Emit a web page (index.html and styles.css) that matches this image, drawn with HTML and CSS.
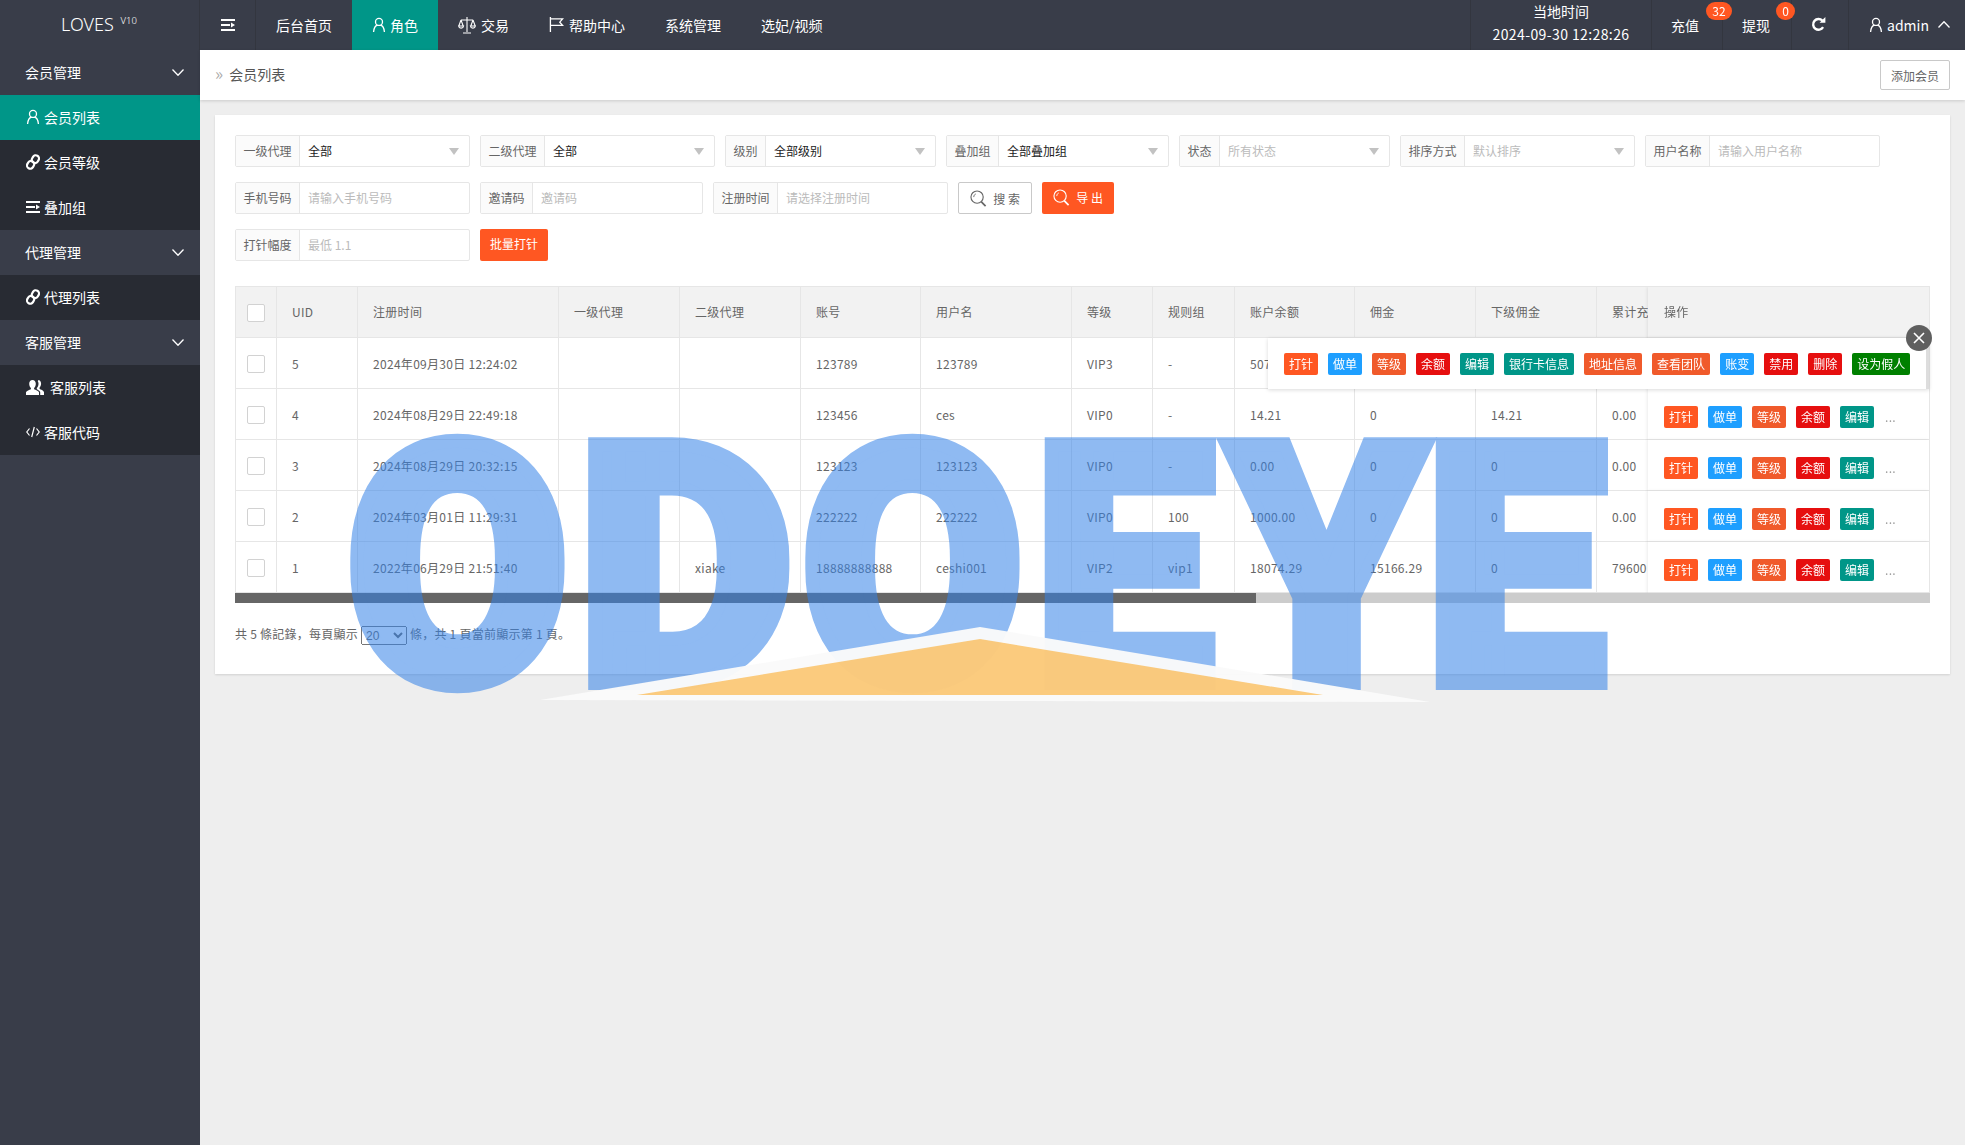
FILE: index.html
```html
<!DOCTYPE html>
<html lang="zh-CN">
<head>
    <meta charset="UTF-8">
    <title>会员列表</title>
    <link rel="stylesheet" href="styles.css">
</head>
<body>
    <!-- icon sprites -->
    <svg class="sprites" xmlns="http://www.w3.org/2000/svg">
        <symbol id="i-user" viewBox="0 0 16 18"><circle cx="8" cy="5.5" r="4" fill="none" stroke="currentColor" stroke-width="1.5"/><path d="M1.8 17c.4-4.600 2.800-7.500 4.400-8M14.200 17c-.4-4.600-2.800-7.500-4.400-8" fill="none" stroke="currentColor" stroke-width="1.5"/></symbol>
        <symbol id="i-shrink" viewBox="0 0 14 12"><path d="M0 0h14v2H0zM0 10h14v2H0zM0 5h9v2H0zM10 3.500 14 6l-4 2.500z" fill="currentColor"/></symbol>
        <symbol id="i-scale" viewBox="0 0 18 18"><path d="M9 1v15M5 17h8M3 4h12M3 4 .8 10M3 4l2.200 6M15 4l-2.200 6M15 4l2.200 6M.6 10c.4 2.800 4.600 2.800 5 0zM12.400 10c.4 2.800 4.600 2.800 5 0z" fill="none" stroke="currentColor" stroke-width="1.100"/></symbol>
        <symbol id="i-flag" viewBox="0 0 16 16"><path d="M1.500 0v16M1.500 2h13l-3 3.500 3 3.500h-13" fill="none" stroke="currentColor" stroke-width="1.400"/></symbol>
        <symbol id="i-link" viewBox="0 0 14 16"><g fill="none" stroke="currentColor" stroke-width="2.200"><rect x="6.200" y="1.200" width="6.400" height="8" rx="3.200" transform="rotate(30 9.400 5.200)"/><rect x="1.400" y="6.800" width="6.400" height="8" rx="3.200" transform="rotate(30 4.600 10.800)"/></g></symbol>
        <symbol id="i-users" viewBox="0 0 18 16"><path d="M6.500 1c2 0 3.300 1.700 3.300 3.800 0 1.800-.7 3.200-1.700 4.200v1.200c1.500.7 4.300 1.500 4.900 3.100V16H0v-2.700c.6-1.600 3.400-2.400 4.900-3.100V9C3.900 8 3.200 6.600 3.200 4.800 3.200 2.700 4.500 1 6.500 1zM12 1c1.900 0 3.100 1.600 3.100 3.600 0 1.700-.6 3-1.500 4v1.400c1.200.6 3.800 1.400 4.400 2.900V16h-3.800v-3c-.7-1.300-2-2-3.400-2.700V9.100c1-1.100 1.700-2.600 1.700-4.300 0-1.100-.3-2.100-.8-2.900.5-.6 1.100-.9 1.800-.9z" fill="currentColor"/></symbol>
        <symbol id="i-code" viewBox="0 0 14 12"><path d="M3.500 2.500 .8 6l2.700 3.500M10.500 2.500 13.200 6l-2.700 3.500M8.300 1 5.700 11" fill="none" stroke="currentColor" stroke-width="1.200"/></symbol>
        <symbol id="i-refresh" viewBox="0 0 14 14"><path d="M11.300 9.500A5 5 0 1 1 10.600 3.400" fill="none" stroke="currentColor" stroke-width="2.200"/><path d="M8 5.400h5.400V0z" fill="currentColor"/></symbol>
        <symbol id="i-down" viewBox="0 0 12 7"><path d="M.5.500 6 6.300 11.500.500" fill="none" stroke="currentColor" stroke-width="1.300"/></symbol>
        <symbol id="i-up" viewBox="0 0 12 7"><path d="M.5 6.500 6 .7l5.500 5.800" fill="none" stroke="currentColor" stroke-width="1.300"/></symbol>
        <symbol id="i-search" viewBox="0 0 18 18"><circle cx="7.500" cy="7.500" r="6.500" fill="none" stroke="currentColor" stroke-width="1.200"/><path d="M11.800 12.300 16.500 17" fill="none" stroke="currentColor" stroke-width="1.800"/><path d="M4 7.500c0-1.500.8-2.800 2-3.300" fill="none" stroke="currentColor"/></symbol>
    </svg>

    <header class="topbar">
        <div class="logo">LOVES <sup>V10</sup></div>
        <div class="toggle"><svg class="ic-shrink"><use href="#i-shrink"/></svg></div>
        <nav class="topnav">
            <a>后台首页</a>
            <a class="active"><svg class="ic"><use href="#i-user"/></svg>角色</a>
            <a><svg class="ic-scale"><use href="#i-scale"/></svg>交易</a>
            <a><svg class="ic-flag"><use href="#i-flag"/></svg>帮助中心</a>
            <a>系统管理</a>
            <a>选妃/视频</a>
        </nav>
        <div class="topright">
            <div class="clock"><div>当地时间</div><div class="clock-time">2024-09-30 12:28:26</div></div>
            <div class="tool tool-recharge">充值<span class="badge badge-wide">32</span></div>
            <div class="tool tool-withdraw">提现<span class="badge">0</span></div>
            <div class="tool tool-refresh"><svg class="ic-refresh"><use href="#i-refresh"/></svg></div>
            <div class="tool tool-user"><svg class="ic"><use href="#i-user"/></svg>admin<svg class="ic-chev"><use href="#i-up"/></svg></div>
        </div>
    </header>

    <div class="layout">
        <aside class="sidebar">
            <div class="side-group">会员管理<svg class="ic-chev"><use href="#i-down"/></svg></div>
            <div class="side-sub">
                <a class="active"><svg class="ic"><use href="#i-user"/></svg>会员列表</a>
                <a><svg class="ic"><use href="#i-link"/></svg>会员等级</a>
                <a><svg class="ic"><use href="#i-shrink"/></svg>叠加组</a>
            </div>
            <div class="side-group">代理管理<svg class="ic-chev"><use href="#i-down"/></svg></div>
            <div class="side-sub">
                <a><svg class="ic"><use href="#i-link"/></svg>代理列表</a>
            </div>
            <div class="side-group">客服管理<svg class="ic-chev"><use href="#i-down"/></svg></div>
            <div class="side-sub">
                <a><svg class="ic-users"><use href="#i-users"/></svg>客服列表</a>
                <a><svg class="ic"><use href="#i-code"/></svg>客服代码</a>
            </div>
        </aside>

        <main class="main">
            <div class="crumb">
                <span class="crumb-text"><span class="crumb-arrow">»</span>会员列表</span>
                <button class="btn-add">添加会员</button>
            </div>

            <section class="card">
                <div class="filter-row">
                    <div class="field"><label>一级代理</label><div class="control">全部<i class="caret"></i></div></div>
                    <div class="field"><label>二级代理</label><div class="control">全部<i class="caret"></i></div></div>
                    <div class="field"><label>级别</label><div class="control">全部级别<i class="caret"></i></div></div>
                    <div class="field"><label>叠加组</label><div class="control">全部叠加组<i class="caret"></i></div></div>
                    <div class="field"><label>状态</label><div class="control muted">所有状态<i class="caret"></i></div></div>
                    <div class="field"><label>排序方式</label><div class="control muted">默认排序<i class="caret"></i></div></div>
                    <div class="field"><label>用户名称</label><div class="control muted">请输入用户名称</div></div>
                </div>
                <div class="filter-row">
                    <div class="field"><label>手机号码</label><div class="control muted">请输入手机号码</div></div>
                    <div class="field"><label>邀请码</label><div class="control muted">邀请码</div></div>
                    <div class="field"><label>注册时间</label><div class="control muted">请选择注册时间</div></div>
                    <button class="btn-search"><svg class="ic-search"><use href="#i-search"/></svg>搜 索</button>
                    <button class="btn-export"><svg class="ic-search"><use href="#i-search"/></svg>导 出</button>
                </div>
                <div class="filter-row">
                    <div class="field"><label>打针幅度</label><div class="control muted">最低 1.1</div></div>
                    <button class="btn-batch">批量打针</button>
                </div>

                <div class="table-box">
                    <div class="table-scroll">
                        <table class="grid">
                            <colgroup>
                                <col class="c-check"><col class="c-uid"><col class="c-date"><col class="c-w121"><col class="c-w121"><col class="c-w120"><col class="c-w151"><col class="c-w81"><col class="c-w82"><col class="c-w120"><col class="c-w121"><col class="c-w121"><col class="c-w121"><col class="c-op">
                            </colgroup>
                            <thead>
                                <tr><th><i class="check"></i></th><th>UID</th><th>注册时间</th><th>一级代理</th><th>二级代理</th><th>账号</th><th>用户名</th><th>等级</th><th>规则组</th><th>账户余额</th><th>佣金</th><th>下级佣金</th><th>累计充值</th><th class="op">操作</th></tr>
                            </thead>
                            <tbody>
                                <tr><td><i class="check"></i></td><td>5</td><td>2024年09月30日 12:24:02</td><td></td><td></td><td>123789</td><td>123789</td><td>VIP3</td><td>-</td><td>5070.00</td><td>0</td><td>0</td><td>0.00</td><td class="op"></td></tr>
                                <tr><td><i class="check"></i></td><td>4</td><td>2024年08月29日 22:49:18</td><td></td><td></td><td>123456</td><td>ces</td><td>VIP0</td><td>-</td><td>14.21</td><td>0</td><td>14.21</td><td>0.00</td>
                                    <td class="op"><div class="ops"><a class="tag orange">打针</a><a class="tag blue">做单</a><a class="tag coral">等级</a><a class="tag red">余额</a><a class="tag teal">编辑</a><span class="more">...</span></div></td></tr>
                                <tr><td><i class="check"></i></td><td>3</td><td>2024年08月29日 20:32:15</td><td></td><td></td><td>123123</td><td>123123</td><td>VIP0</td><td>-</td><td>0.00</td><td>0</td><td>0</td><td>0.00</td>
                                    <td class="op"><div class="ops"><a class="tag orange">打针</a><a class="tag blue">做单</a><a class="tag coral">等级</a><a class="tag red">余额</a><a class="tag teal">编辑</a><span class="more">...</span></div></td></tr>
                                <tr><td><i class="check"></i></td><td>2</td><td>2024年03月01日 11:29:31</td><td></td><td></td><td>222222</td><td>222222</td><td>VIP0</td><td>100</td><td>1000.00</td><td>0</td><td>0</td><td>0.00</td>
                                    <td class="op"><div class="ops"><a class="tag orange">打针</a><a class="tag blue">做单</a><a class="tag coral">等级</a><a class="tag red">余额</a><a class="tag teal">编辑</a><span class="more">...</span></div></td></tr>
                                <tr><td><i class="check"></i></td><td>1</td><td>2022年06月29日 21:51:40</td><td></td><td>xiake</td><td>18888888888</td><td>ceshi001</td><td>VIP2</td><td>vip1</td><td>18074.29</td><td>15166.29</td><td>0</td><td>79600</td>
                                    <td class="op"><div class="ops"><a class="tag orange">打针</a><a class="tag blue">做单</a><a class="tag coral">等级</a><a class="tag red">余额</a><a class="tag teal">编辑</a><span class="more">...</span></div></td></tr>
                            </tbody>
                        </table>
                    </div>
                    <div class="hbar"><div class="hbar-thumb"></div></div>

                    <!-- expanded row actions -->
                    <div class="popup">
                        <a class="tag orange">打针</a><a class="tag blue">做单</a><a class="tag coral">等级</a><a class="tag red">余额</a><a class="tag teal">编辑</a><a class="tag teal">银行卡信息</a><a class="tag coral">地址信息</a><a class="tag coral">查看团队</a><a class="tag blue">账变</a><a class="tag red">禁用</a><a class="tag red">删除</a><a class="tag green">设为假人</a>
                        <span class="popup-close"><svg viewBox="0 0 12 12"><path d="M1 1l10 10M11 1 1 11" fill="none" stroke="currentColor" stroke-width="1.600"/></svg></span>
                    </div>
                </div>

                <div class="pager">共 5 條記錄，每頁顯示 <select class="pager-size"><option>20</option></select> 條，共 1 頁當前顯示第 1 頁。</div>
            </section>
        </main>
    </div>

    <!-- site watermark laid over the whole screenshot -->
    <svg class="watermark" viewBox="0 0 1965 1145" xmlns="http://www.w3.org/2000/svg">
        <g class="wm-text">
            <text x="346" y="683" textLength="223" lengthAdjust="spacingAndGlyphs">O</text>
            <text x="577" y="683" textLength="217" lengthAdjust="spacingAndGlyphs">D</text>
            <text x="801" y="683" textLength="223" lengthAdjust="spacingAndGlyphs">O</text>
            <text x="1034" y="683" textLength="180" lengthAdjust="spacingAndGlyphs">E</text>
            <text x="1227" y="683" textLength="199" lengthAdjust="spacingAndGlyphs">Y</text>
            <text x="1425" y="683" textLength="181" lengthAdjust="spacingAndGlyphs">E</text>
        </g>
        <polygon class="wm-band" points="980,627 1430,702 540,700"/>
        <polygon class="wm-roof" points="980,639 1323,695 637,695"/>
    </svg>
</body>
</html>
```

FILE: styles.css
```css
* {
    box-sizing: border-box;
}

html, body {
    margin: 0;
    height: 100%;
    overflow: hidden;
}

body {
    position: relative;
    font-family: "Noto Sans CJK SC", "Noto Sans", sans-serif;
    font-size: 14px;
    color: #666;
    background-color: #eee;
}

.sprites {
    display: none;
}

a {
    color: inherit;
    text-decoration: none;
}

/* top bar */
.topbar {
    display: flex;
    height: 50px;
    background-color: #393d49;
    color: #fff;
}

.logo {
    width: 200px;
    padding-left: 61px;
    font-family: "Noto Sans", sans-serif;
    font-size: 18px;
    font-weight: 300;
    line-height: 48px;
    border-right: 1px solid #33363f;
}

.logo sup {
    font-size: 9.500px;
    line-height: 0;
    margin-left: 2px;
}

.toggle {
    display: flex;
    align-items: center;
    justify-content: center;
    width: 56px;
    border-right: 1px solid #33363f;
}

.ic-shrink {
    width: 14px;
    height: 12px;
}

.topnav {
    display: flex;
}

.topnav a {
    display: flex;
    align-items: center;
    padding: 0 20px 1px;
}

.topnav a.active {
    background-color: #009688;
}

.ic {
    width: 14px;
    height: 16px;
    margin-right: 4px;
    flex: none;
}

.ic-scale {
    width: 18px;
    height: 18px;
    margin-right: 5px;
}

.ic-flag {
    width: 15px;
    height: 15px;
    margin-right: 5px;
}

.topright {
    display: flex;
    margin-left: auto;
}

.clock {
    width: 181px;
    text-align: center;
    line-height: 23px;
    border-left: 1px solid #33363f;
}

.clock-time {
    letter-spacing: 0.4px;
}

.tool {
    position: relative;
    display: flex;
    align-items: center;
    padding-bottom: 1px;
    border-left: 1px solid #33363f;
}

.tool-recharge {
    width: 71px;
    padding-left: 19px;
}

.tool-withdraw {
    width: 69px;
    padding-left: 19px;
}

.tool-refresh {
    width: 57px;
    padding-right: 3px;
    justify-content: center;
}

.tool-user {
    width: 117px;
    padding-left: 20px;
}

.ic-refresh {
    width: 15px;
    height: 15px;
}

.ic-chev {
    width: 12px;
    height: 7px;
}

.tool-user .ic-chev {
    margin-left: 9px;
}

.badge {
    position: absolute;
    z-index: 1;
    top: 2px;
    right: -4px;
    width: 19px;
    height: 18px;
    border-radius: 9px;
    background-color: #ff5722;
    font-size: 12px;
    line-height: 18px;
    text-align: center;
    color: #fff;
}

.badge-wide {
    right: -10px;
    width: 26px;
}

/* side menu */
.layout {
    display: flex;
    height: 1095px;
}

.sidebar {
    width: 200px;
    flex: none;
    background-color: #393d49;
    color: #fff;
}

.side-group {
    display: flex;
    align-items: center;
    justify-content: space-between;
    height: 45px;
    padding: 0 16px 2px 25px;
}

.side-group .ic-chev {
    margin-top: 2px;
}

.side-sub {
    background-color: #282b33;
}

.side-sub a {
    display: flex;
    align-items: center;
    height: 45px;
    padding: 0 0 2px 26px;
}

.side-sub a.active {
    background-color: #009688;
}

.ic-users {
    width: 18px;
    height: 16px;
    margin-right: 6px;
}

/* content */
.main {
    flex: 1;
    min-width: 0;
}

.crumb {
    display: flex;
    align-items: center;
    justify-content: space-between;
    height: 50px;
    padding: 0 15px;
    background-color: #fff;
    box-shadow: 0 1px 3px rgba(0, 0, 0, 0.15);
}

.crumb-text {
    margin-bottom: 2px;
    color: #555;
}

.crumb-arrow {
    margin-right: 6px;
    font-size: 17px;
    line-height: 1;
    color: #aaa;
}

.btn-add {
    width: 70px;
    height: 30px;
    padding: 0;
    border: 1px solid #c9c9c9;
    border-radius: 2px;
    background-color: #fff;
    color: #666;
    font: 12px "Noto Sans CJK SC", sans-serif;
}

.card {
    margin: 15px 15px 0;
    height: 559px;
    padding: 20px;
    background-color: #fff;
    box-shadow: 0 1px 2px rgba(0, 0, 0, 0.12);
}

.filter-row {
    display: flex;
    gap: 10px;
    margin-bottom: 15px;
    font-size: 12px;
}

.field {
    display: flex;
    height: 32px;
    border: 1px solid #e6e6e6;
    border-radius: 2px;
}

.field label {
    padding: 0 7.500px;
    background-color: #fbfbfb;
    border-right: 1px solid #e6e6e6;
    line-height: 30px;
    color: #666;
}

.control {
    position: relative;
    width: 169px;
    padding-left: 8px;
    line-height: 30px;
    color: #222;
}

.control.muted {
    color: #bbb;
}

.caret {
    position: absolute;
    top: 12px;
    right: 10px;
    border-style: solid;
    border-width: 7px 5.500px 0;
    border-color: #c2c2c2 transparent transparent;
}

.btn-search, .btn-export, .btn-batch {
    display: flex;
    align-items: center;
    justify-content: center;
    height: 32px;
    padding: 0;
    border-radius: 2px;
    font: 12px "Noto Sans CJK SC", sans-serif;
}

.btn-search {
    width: 74px;
    border: 1px solid #c9c9c9;
    background-color: #fff;
    color: #666;
}

.btn-export {
    width: 72px;
    padding-bottom: 2px;
    border: none;
    background-color: #ff5722;
    color: #fff;
}

.btn-batch {
    width: 68px;
    padding-bottom: 3px;
    border: none;
    background-color: #ff5722;
    color: #fff;
}

.ic-search {
    width: 17px;
    height: 17px;
    margin-right: 6px;
}

/* table */
.table-box {
    position: relative;
    margin-top: 25px;
}

.table-scroll {
    overflow: hidden;
    border-top: 1px solid #e6e6e6;
    border-left: 1px solid #e6e6e6;
    border-right: 1px solid #e6e6e6;
}

.grid {
    width: 1762px;
    table-layout: fixed;
    border-collapse: separate;
    border-spacing: 0;
    font-size: 12px;
    letter-spacing: 0.3px;
}

.c-check { width: 41px; }
.c-uid { width: 81px; }
.c-date { width: 201px; }
.c-w121 { width: 121px; }
.c-w120 { width: 120px; }
.c-w151 { width: 151px; }
.c-w81 { width: 81px; }
.c-w82 { width: 82px; }
.c-op { width: 281px; }

.grid th, .grid td {
    height: 51px;
    padding: 0 0 0 15px;
    border-right: 1px solid #e6e6e6;
    border-bottom: 1px solid #e6e6e6;
    text-align: left;
    font-weight: 400;
    white-space: nowrap;
    overflow: hidden;
}

.grid th {
    padding-bottom: 2px;
    background-color: #f2f2f2;
}

.grid th:first-child, .grid td:first-child {
    padding-left: 11px;
}

.grid .op {
    position: sticky;
    right: 0;
    padding-left: 16px;
    background-color: #fff;
    box-shadow: -1px 0 3px rgba(0, 0, 0, 0.08);
    border-right: none;
}

.grid th.op {
    background-color: #f2f2f2;
}

.check {
    display: block;
    width: 18px;
    height: 18px;
    margin-top: 2px;
    border: 1px solid #d2d2d2;
    border-radius: 2px;
    background-color: #fff;
}

.grid th .check {
    margin-top: 4px;
}

.ops {
    display: flex;
    align-items: center;
    gap: 10px;
    padding-top: 5px;
}

.more {
    margin-left: 1px;
    color: #999;
}

.tag {
    height: 22px;
    padding: 0 5px;
    border-radius: 2px;
    font-size: 12px;
    letter-spacing: 0;
    line-height: 22px;
    color: #fff;
}

.orange { background-color: #ff5722; }
.coral { background-color: #f05a2b; }
.blue { background-color: #1e9fff; }
.red { background-color: #e60f0f; }
.teal { background-color: #009688; }
.green { background-color: #008000; }

.hbar {
    height: 10px;
    background-color: #ccc;
}

.hbar-thumb {
    width: 1021px;
    height: 100%;
    background-color: #666;
}

.popup {
    position: absolute;
    top: 52px;
    left: 1033px;
    display: flex;
    align-items: center;
    gap: 10px;
    width: 661px;
    height: 51px;
    padding-left: 16px;
    background-color: #fff;
    border-right: 3px solid #ddd;
    box-shadow: 0 1px 4px rgba(0, 0, 0, 0.15);
}

.popup-close {
    position: absolute;
    top: -13px;
    right: -6px;
    display: flex;
    align-items: center;
    justify-content: center;
    width: 26px;
    height: 26px;
    border-radius: 50%;
    background-color: #5f5f5f;
    color: #fff;
}

.popup-close svg {
    width: 12px;
    height: 12px;
}

.pager {
    margin-top: 22px;
    font-size: 12px;
    letter-spacing: 0.25px;
    color: #666;
}

.pager-size {
    width: 46px;
    height: 19px;
    padding: 0;
    font-size: 12px;
    color: #666;
    vertical-align: middle;
}

/* watermark */
.watermark {
    position: absolute;
    top: 0;
    left: 0;
    width: 1965px;
    height: 1145px;
    pointer-events: none;
}

.wm-text {
    opacity: 0.55;
    font-family: Roboto, sans-serif;
    font-size: 336px;
    font-weight: 900;
    fill: #3381e7;
    stroke: #3381e7;
    stroke-width: 14px;
}

.wm-band {
    fill: rgba(250, 250, 250, 0.97);
}

.wm-roof {
    fill: rgba(251, 176, 59, 0.65);
}
```
